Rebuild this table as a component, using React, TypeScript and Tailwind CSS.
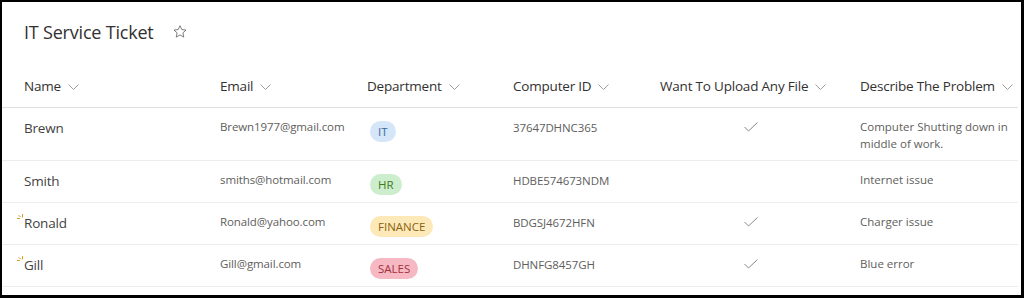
import React from "react"

interface Ticket {
  name: string
  email: string
  dept: "IT" | "HR" | "FINANCE" | "SALES"
  computerId: string
  upload: boolean
  problem: string[]
  isNew?: boolean
}

const tickets: Ticket[] = [
  { name: "Brewn", email: "Brewn1977@gmail.com", dept: "IT", computerId: "37647DHNC365", upload: true, problem: ["Computer Shutting down in", "middle of work."] },
  { name: "Smith", email: "smiths@hotmail.com", dept: "HR", computerId: "HDBE574673NDM", upload: false, problem: ["Internet issue"] },
  { name: "Ronald", email: "Ronald@yahoo.com", dept: "FINANCE", computerId: "BDGSJ4672HFN", upload: true, problem: ["Charger issue"], isNew: true },
  { name: "Gill", email: "Gill@gmail.com", dept: "SALES", computerId: "DHNFG8457GH", upload: true, problem: ["Blue error"], isNew: true },
]

const pillStyles: Record<Ticket["dept"], string> = {
  IT: "bg-[#d4e6f8] text-[#3a6a9c]",
  HR: "bg-[#cdeecd] text-[#3f7a1e]",
  FINANCE: "bg-[#fde8b8] text-[#8a6410]",
  SALES: "bg-[#f6b9c3] text-[#a3303c]",
}

const cols = "grid grid-cols-[196px_147px_146px_147px_200px_1fr] pl-[22px]"

function Chevron() {
  return (
    <svg width="11" height="6" viewBox="0 0 11 6" className="ml-[7px] mt-[1px] shrink-0">
      <polyline points="0.5,0.5 5.5,5.5 10.5,0.5" fill="none" stroke="#a19f9d" strokeWidth="1" />
    </svg>
  )
}

function Header({ label }: { label: string }) {
  return (
    <div className="flex items-center whitespace-nowrap">
      <span>{label}</span>
      <Chevron />
    </div>
  )
}

function Sparkle() {
  return (
    <svg width="8" height="8" viewBox="0 0 8 8" className="absolute left-[-7px] top-[1px]">
      <g stroke="#d49a1a" strokeWidth="1" strokeLinecap="round">
        <line x1="0.5" y1="4.5" x2="2.5" y2="4.5" />
        <line x1="2" y1="1.5" x2="3.5" y2="3" />
        <line x1="5.5" y1="0.5" x2="5.5" y2="3" />
      </g>
    </svg>
  )
}

function Check() {
  return (
    <svg width="14" height="10" viewBox="0 0 14 10">
      <polyline points="0.5,5 4.5,9 13.5,0.5" fill="none" stroke="#8a8886" strokeWidth="1" />
    </svg>
  )
}

export default function App() {
  return (
    <div className="w-[1024px] h-[298px] bg-white border-black border-t-2 border-l-2 border-r-[3px] border-b-[3px] overflow-hidden font-['Open_Sans',sans-serif]">
      <div className="mr-[3px]">
        <div className="flex items-center pl-[22px] pt-[18px] h-[42px] text-[18px] leading-[24px] font-medium text-[#323130]">
          <span className="tracking-[-0.2px]">IT Service Ticket</span>
          <svg width="14" height="13" viewBox="0 0 24 23" className="ml-[19px] mt-[-1px]">
            <path
              d="M12 1.2l3.2 6.9 7.5.8-5.6 5.1 1.6 7.4L12 17.6l-6.7 3.8 1.6-7.4L1.3 8.9l7.5-.8z"
              fill="none"
              stroke="#605e5c"
              strokeWidth="1.4"
              strokeLinejoin="round"
            />
          </svg>
        </div>

        <div className={`${cols} mt-[32px] pb-[11px] leading-[20px] text-[13.5px] font-medium text-[#323130] border-b border-[#e1dfdd] tracking-[-0.2px]`}>
          <Header label="Name" />
          <Header label="Email" />
          <Header label="Department" />
          <Header label="Computer ID" />
          <Header label="Want To Upload Any File" />
          <Header label="Describe The Problem" />
        </div>

        {tickets.map((t, i) => (
          <div
            key={t.name}
            className={`${cols} ${i === 0 ? "h-[53px]" : "h-[42px]"} pt-[10px] items-start border-b border-[#efedeb]`}
          >
            <div className="relative text-[13.5px] leading-[20px] text-[#444241] tracking-[-0.2px]">
              {t.isNew && <Sparkle />}
              {t.name}
            </div>
            <div className="text-[11.5px] leading-[18px] text-[#605e5c] tracking-[-0.1px]">{t.email}</div>
            <div>
              <span className={`inline-block ml-[3px] h-[21px] leading-[21px] px-[8px] rounded-full text-[11.5px] ${pillStyles[t.dept]}`}>
                {t.dept}
              </span>
            </div>
            <div className="text-[11.5px] leading-[19px] text-[#605e5c] tracking-[-0.1px]">{t.computerId}</div>
            <div className="pl-[84px] pt-[4px]">{t.upload && <Check />}</div>
            <div className="text-[11.5px] leading-[17px] text-[#605e5c] whitespace-nowrap">
              {t.problem.map((p) => (
                <div key={p}>{p}</div>
              ))}
            </div>
          </div>
        ))}
      </div>
    </div>
  )
}
